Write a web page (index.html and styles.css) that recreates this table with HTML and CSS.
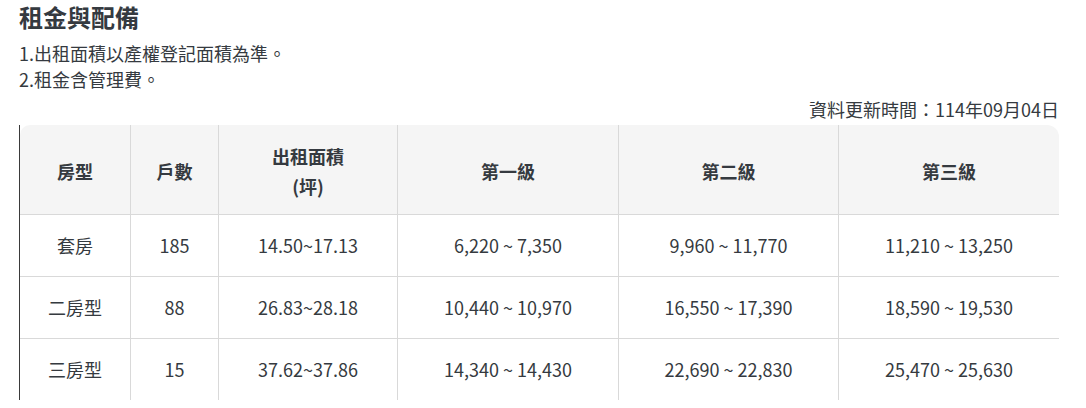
FILE: index.html
```html
<!DOCTYPE html>
<html lang="zh-Hant">
<head>
<meta charset="utf-8">
<title>租金與配備</title>
<link rel="stylesheet" href="styles.css">
</head>
<body>
<main class="page">
  <h2 class="title">租金與配備</h2>
  <ol class="notes">
    <li>1.出租面積以產權登記面積為準。</li>
    <li>2.租金含管理費。</li>
  </ol>
  <p class="updated">資料更新時間：114年09月04日</p>
  <div class="table-wrap">
    <table class="rent">
      <colgroup>
        <col class="c1"><col class="c2"><col class="c3"><col class="c4"><col class="c5"><col class="c6">
      </colgroup>
      <thead>
        <tr>
          <th>房型</th>
          <th>戶數</th>
          <th>出租面積<br>(坪)</th>
          <th>第一級</th>
          <th>第二級</th>
          <th>第三級</th>
        </tr>
      </thead>
      <tbody>
        <tr>
          <td>套房</td><td>185</td><td>14.50~17.13</td><td>6,220 ~ 7,350</td><td>9,960 ~ 11,770</td><td>11,210 ~ 13,250</td>
        </tr>
        <tr>
          <td>二房型</td><td>88</td><td>26.83~28.18</td><td>10,440 ~ 10,970</td><td>16,550 ~ 17,390</td><td>18,590 ~ 19,530</td>
        </tr>
        <tr>
          <td>三房型</td><td>15</td><td>37.62~37.86</td><td>14,340 ~ 14,430</td><td>22,690 ~ 22,830</td><td>25,470 ~ 25,630</td>
        </tr>
      </tbody>
    </table>
  </div>
</main>
</body>
</html>
```

FILE: styles.css
```css
html, body {
  margin: 0;
  padding: 0;
  background: #ffffff;
}
body {
  font-family: "Noto Sans CJK TC", "Noto Sans", sans-serif;
  color: #353a40;
}
.page {
  width: 1040px;
  padding: 2px 0 0 19px;
}
.title {
  margin: 0;
  font-size: 24px;
  line-height: 30px;
  font-weight: 700;
}
.notes {
  list-style: none;
  margin: 8px 0 0;
  padding: 0;
  font-size: 18px;
  line-height: 26px;
}
.updated {
  margin: 5px 0 0;
  text-align: right;
  font-size: 18px;
  line-height: 24px;
}
.table-wrap {
  margin-top: 4px;
  border-left: 1px solid #3a3a3a;
}
.rent {
  width: 100%;
  border-collapse: separate;
  border-spacing: 0;
  table-layout: fixed;
  font-size: 18px;
  text-align: center;
}
.c1 { width: 111px; }
.c2 { width: 88px; }
.c3 { width: 179px; }
.c4 { width: 221px; }
.c5 { width: 220px; }
.c6 { width: 220px; }
.rent th,
.rent td {
  border-right: 1px solid #d9d9d9;
  border-bottom: 1px solid #d9d9d9;
  line-height: 29px;
  padding: 0;
}
.rent th:last-child,
.rent td:last-child {
  border-right: none;
}
.rent tbody tr:last-child td {
  border-bottom: none;
}
.rent th {
  background: #f5f5f5;
  font-weight: 700;
  height: 87px;
  padding-top: 2px;
  line-height: 30px;
}
.rent th:first-child {
  border-top-left-radius: 10px;
}
.rent th:last-child {
  border-top-right-radius: 12px;
}
.rent td {
  height: 61px;
}
```
